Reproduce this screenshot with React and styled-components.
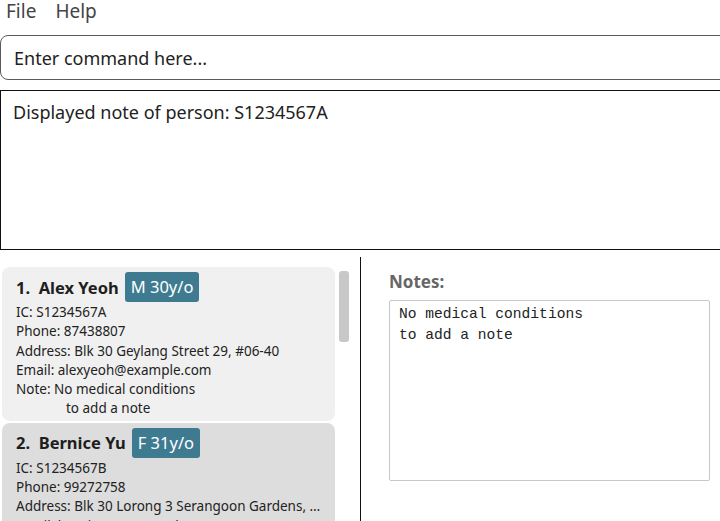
import React from "react";
import styled, { createGlobalStyle } from "styled-components";

const GlobalStyle = createGlobalStyle`
  html, body {
    margin: 0;
    padding: 0;
    background: #ffffff;
  }
  body {
    font-family: "Noto Sans", "Open Sans", sans-serif;
    overflow: hidden;
  }
`;

const Window = styled.div`
  width: 720px;
  height: 521px;
  overflow: hidden;
  display: flex;
  flex-direction: column;
  background: #ffffff;
`;

const MenuBar = styled.div`
  display: flex;
  height: 24px;
  padding-left: 6px;
  gap: 19px;
  align-items: flex-start;
`;

const MenuItem = styled.span`
  font-size: 19px;
  color: #444444;
  line-height: 23px;
`;

const CommandBox = styled.div`
  margin-top: 11px;
  margin-right: -20px;
  height: 45px;
  box-sizing: border-box;
  border: 1.5px solid #5a5a5a;
  border-radius: 8px;
  display: flex;
  align-items: center;
  padding-left: 13px;
  font-size: 18px;
  color: #222222;
`;

const ResultBox = styled.div`
  margin-top: 10px;
  margin-right: -20px;
  height: 160px;
  box-sizing: border-box;
  border: 1.5px solid #111111;
  padding: 9px 12px;
  font-size: 18px;
  color: #222222;
`;

const Lower = styled.div`
  flex: 1;
  display: flex;
  margin-top: 7px;
  min-height: 0;
`;

const ListPanel = styled.div`
  width: 361px;
  border-right: 1.5px solid #111111;
  display: flex;
  padding: 10px 0 0 2px;
  box-sizing: border-box;
  gap: 4px;
  overflow: hidden;
`;

const CardList = styled.div`
  width: 333px;
  display: flex;
  flex-direction: column;
  gap: 2px;
`;

const Card = styled.div`
  background: ${(p) => (p.$alt ? "#dddddd" : "#f0f0f0")};
  border-radius: 8px;
  padding: 5px 10px 2px 14px;
  display: flex;
  flex-direction: column;
`;

const NameRow = styled.div`
  display: flex;
  align-items: center;
  gap: 6px;
  margin-bottom: 1px;
`;

const Name = styled.span`
  font-size: 16.5px;
  font-weight: 700;
  color: #1e1e1e;
  white-space: pre;
`;

const Badge = styled.span`
  background: #3e7b91;
  color: #ffffff;
  font-size: 16.5px;
  height: 30px;
  line-height: 30px;
  padding: 0 6px;
  border-radius: 3px;
`;

const Field = styled.div`
  font-size: 13.5px;
  line-height: 19.3px;
  color: #222222;
  white-space: nowrap;
  overflow: hidden;
  text-overflow: ellipsis;
  padding-left: ${(p) => p.$indent || 0}px;
`;

const Scrollbar = styled.div`
  width: 10px;
  height: 71px;
  margin-top: 4px;
  background: #c8c8c8;
  border-radius: 3px;
`;

const NotesPanel = styled.div`
  flex: 1;
  padding: 10px 10px 0 28px;
  display: flex;
  flex-direction: column;
`;

const NotesLabel = styled.div`
  font-size: 17px;
  font-weight: 700;
  color: #666666;
  height: 30px;
  line-height: 30px;
`;

const NotesArea = styled.div`
  margin-top: 3px;
  width: 321px;
  height: 181px;
  box-sizing: border-box;
  border: 1px solid #c8c8c8;
  border-radius: 2px;
  padding: 3px 9px;
  font-family: "Liberation Mono", "DejaVu Sans Mono", monospace;
  font-size: 14.6px;
  line-height: 21px;
  color: #222222;
  white-space: pre;
`;

const people = [
  {
    name: "1.  Alex Yeoh",
    badge: "M 30y/o",
    ic: "S1234567A",
    phone: "87438807",
    address: "Blk 30 Geylang Street 29, #06-40",
    email: "alexyeoh@example.com",
    note: ["No medical conditions", "to add a note"],
  },
  {
    name: "2.  Bernice Yu",
    badge: "F 31y/o",
    ic: "S1234567B",
    phone: "99272758",
    address: "Blk 30 Lorong 3 Serangoon Gardens, #07-18",
    email: "berniceyu@example.com",
    note: ["None"],
  },
];

const PersonCard = ({ person, alt }) => (
  <Card $alt={alt}>
    <NameRow>
      <Name>{person.name}</Name>
      <Badge>{person.badge}</Badge>
    </NameRow>
    <Field>IC: {person.ic}</Field>
    <Field>Phone: {person.phone}</Field>
    <Field>Address: {person.address}</Field>
    <Field>Email: {person.email}</Field>
    <Field>Note: {person.note[0]}</Field>
    {person.note[1] && <Field $indent={50}>{person.note[1]}</Field>}
  </Card>
);

export default function App() {
  return (
    <Window>
      <GlobalStyle />
      <MenuBar>
        <MenuItem>File</MenuItem>
        <MenuItem>Help</MenuItem>
      </MenuBar>
      <CommandBox>Enter command here...</CommandBox>
      <ResultBox>Displayed note of person: S1234567A</ResultBox>
      <Lower>
        <ListPanel>
          <CardList>
            {people.map((p, i) => (
              <PersonCard key={p.ic} person={p} alt={i % 2 === 1} />
            ))}
          </CardList>
          <Scrollbar />
        </ListPanel>
        <NotesPanel>
          <NotesLabel>Notes:</NotesLabel>
          <NotesArea>{"No medical conditions\nto add a note"}</NotesArea>
        </NotesPanel>
      </Lower>
    </Window>
  );
}
